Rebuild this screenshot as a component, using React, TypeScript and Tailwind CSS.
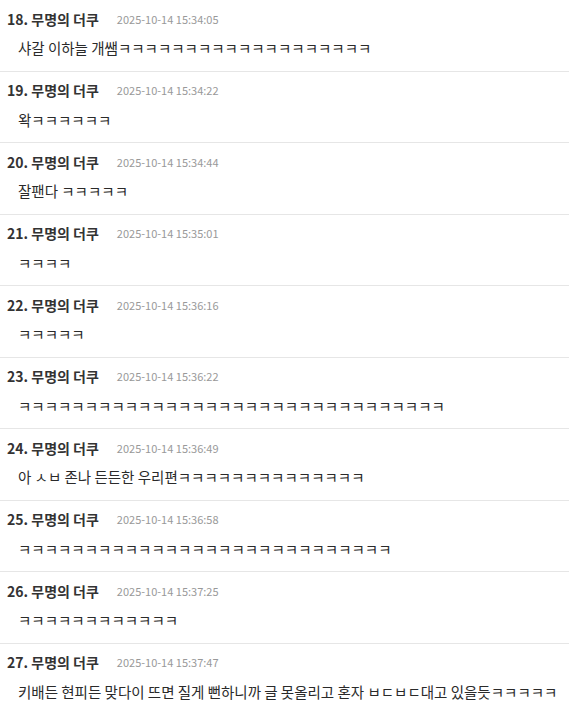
const comments = [
  { no: 18, time: '2025-10-14 15:34:05', text: '샤갈 이하늘 개쌤ㅋㅋㅋㅋㅋㅋㅋㅋㅋㅋㅋㅋㅋㅋㅋㅋㅋㅋㅋ' },
  { no: 19, time: '2025-10-14 15:34:22', text: '왁ㅋㅋㅋㅋㅋㅋ' },
  { no: 20, time: '2025-10-14 15:34:44', text: '잘팬다 ㅋㅋㅋㅋㅋ' },
  { no: 21, time: '2025-10-14 15:35:01', text: 'ㅋㅋㅋㅋ' },
  { no: 22, time: '2025-10-14 15:36:16', text: 'ㅋㅋㅋㅋㅋ' },
  { no: 23, time: '2025-10-14 15:36:22', text: 'ㅋㅋㅋㅋㅋㅋㅋㅋㅋㅋㅋㅋㅋㅋㅋㅋㅋㅋㅋㅋㅋㅋㅋㅋㅋㅋㅋㅋㅋㅋㅋㅋ' },
  { no: 24, time: '2025-10-14 15:36:49', text: '아 ㅅㅂ 존나 든든한 우리편ㅋㅋㅋㅋㅋㅋㅋㅋㅋㅋㅋㅋㅋㅋ' },
  { no: 25, time: '2025-10-14 15:36:58', text: 'ㅋㅋㅋㅋㅋㅋㅋㅋㅋㅋㅋㅋㅋㅋㅋㅋㅋㅋㅋㅋㅋㅋㅋㅋㅋㅋㅋㅋ' },
  { no: 26, time: '2025-10-14 15:37:25', text: 'ㅋㅋㅋㅋㅋㅋㅋㅋㅋㅋㅋㅋ' },
  { no: 27, time: '2025-10-14 15:37:47', text: '키배든 현피든 맞다이 뜨면 질게 뻔하니까 글 못올리고 혼자 ㅂㄷㅂㄷ대고 있을듯ㅋㅋㅋㅋㅋ' },
];

export default function App() {
  return (
    <ul className="w-[569px] bg-white font-['Noto_Sans_CJK_KR',sans-serif]">
      {comments.map((c) => (
        <li key={c.no} className="h-[71.5px] border-b border-[#e6e6e6] pl-[7px] pt-[9px]">
          <div className="flex h-5 items-center">
            <span className="text-[14px] font-bold text-[#333]">
              {c.no}. 무명의 더쿠
            </span>
            <span className="ml-[18px] text-[11px] text-[#999]">{c.time}</span>
          </div>
          <p className="mt-[9px] h-5 whitespace-nowrap pl-[11px] text-[14.5px] leading-5 text-[#2a2a2a]">
            {c.text}
          </p>
        </li>
      ))}
    </ul>
  );
}
